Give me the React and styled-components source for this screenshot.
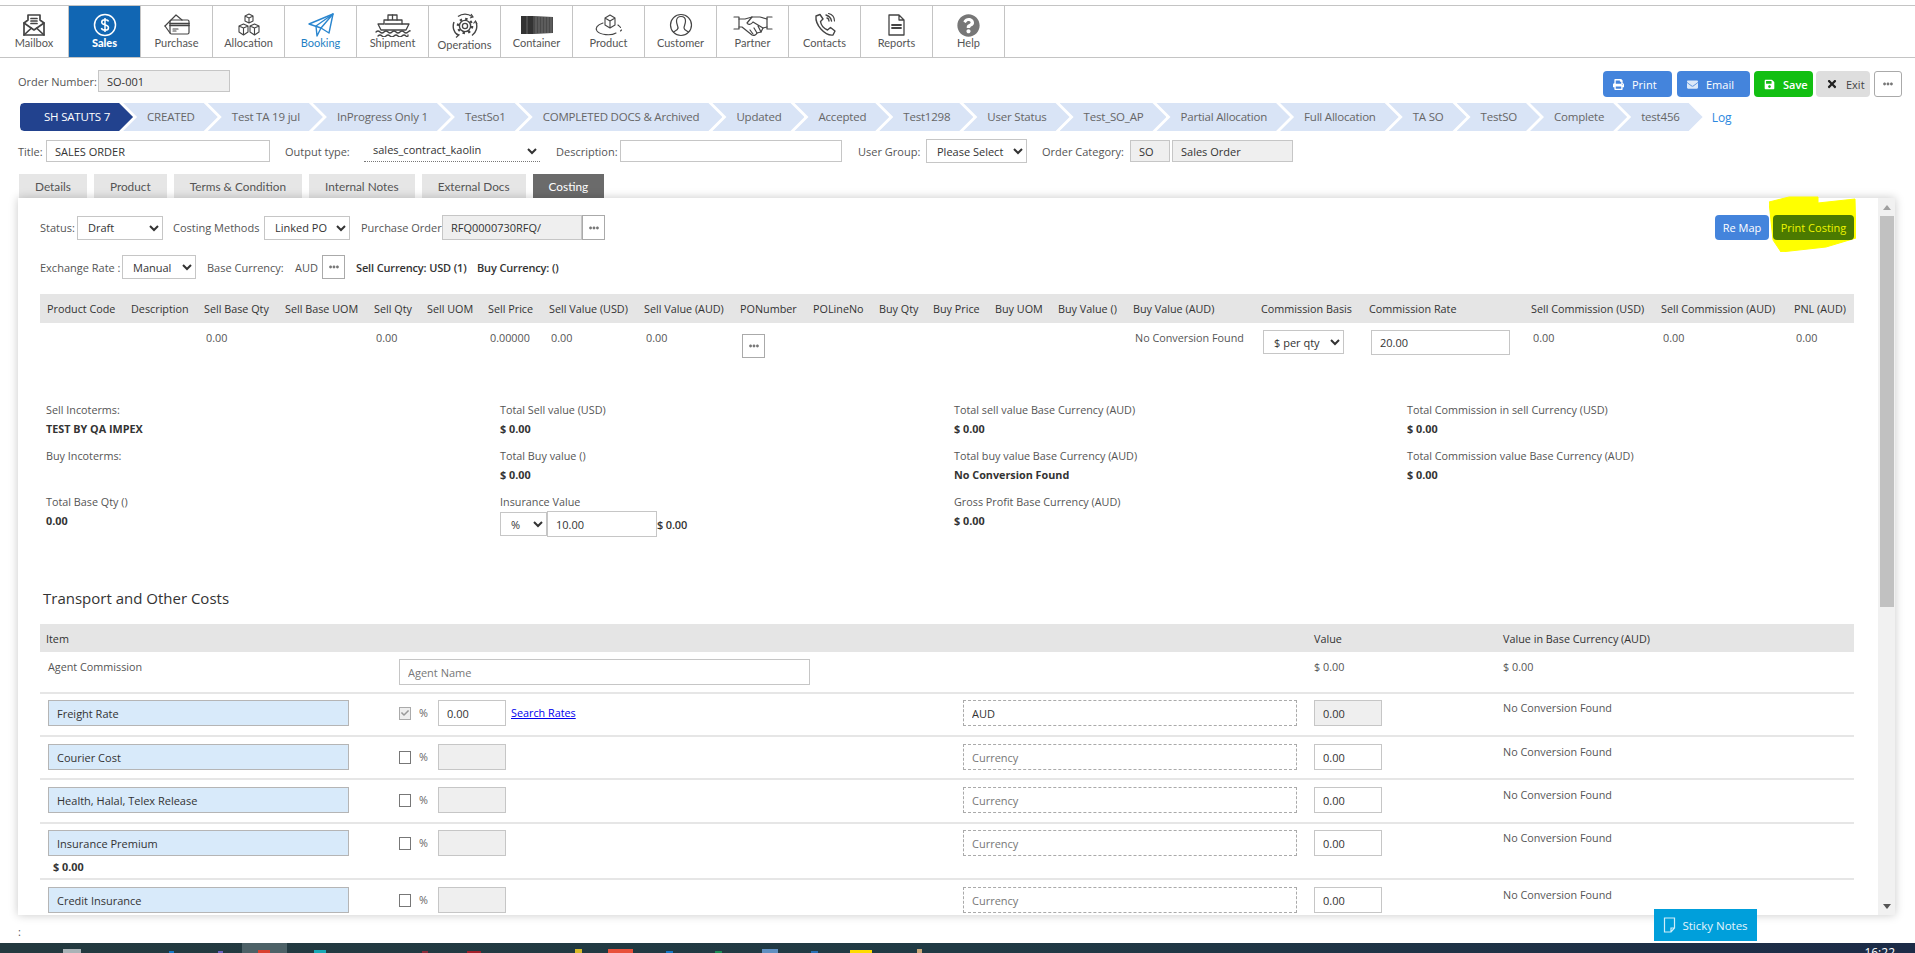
import styled, { createGlobalStyle } from 'styled-components';
import { FaCheck, FaEllipsisH, FaEnvelope, FaPrint, FaQuestionCircle, FaSave, FaTimes } from 'react-icons/fa';

const GlobalStyle = createGlobalStyle`
  html, body {
    margin: 0;
    padding: 0;
    background: #fff;
  }
  * {
    box-sizing: border-box;
  }
  body {
    font-family: "Open Sans", "Noto Sans", sans-serif;
    font-size: 11px;
    color: #444;
  }
`;

const Page = styled.div`
  position: relative;
  width: 1915px;
  height: 953px;
  overflow: hidden;
  padding-top: 5px;
`;

/* top navigation */
const Nav = styled.nav`
  display: flex;
  height: 53px;
  border-top: 1px solid #c4c4c4;
  border-bottom: 1px solid #c4c4c4;
`;

const NavItem = styled.div`
  width: ${(p) => p.$w || 72}px;
  flex: none;
  display: flex;
  flex-direction: column;
  align-items: center;
  padding-top: 6px;
  border-right: 1px solid #c4c4c4;
  font-family: Lato, "Open Sans", sans-serif;
  font-size: 11px;
  line-height: 14px;
  font-weight: ${(p) => (p.$active ? 900 : 400)};
  color: ${(p) => (p.$active ? '#fff' : p.$blue ? '#1f7fc4' : '#555')};
  background: ${(p) => (p.$active ? '#1166b3' : 'transparent')};
`;

const NavIcon = styled.div`
  height: ${(p) => (p.$tall ? 28 : 26)}px;
  display: flex;
  align-items: center;
  justify-content: center;
  color: ${(p) => (p.$active ? '#fff' : p.$blue ? '#2a86cf' : '#444')};
  svg {
    display: block;
  }
`;

const NavLabel = styled.div`
  margin-top: -2px;
`;

const Stroke = ({ w = 24, h = 24, vb = '0 0 24 24', sw = 1.4, children }) => (
  <svg width={w} height={h} viewBox={vb} fill="none" stroke="currentColor" strokeWidth={sw} strokeLinejoin="round" strokeLinecap="round">
    {children}
  </svg>
);

const icons = {
  mailbox: (
    <Stroke sw={1.7}>
      <path d="M2 10 L6 7 V2 H18 V7 L22 10 V22 H2 Z" />
      <path d="M2 10 L12 17 L22 10 M2 22 L9.5 15 M22 22 L14.5 15" />
      <path d="M9 5.5 H15 M9 8 H15 M9 10.5 H15" />
    </Stroke>
  ),
  sales: (
    <svg width="24" height="24" viewBox="0 0 24 24" fill="none" stroke="currentColor" strokeWidth="1.5">
      <circle cx="12" cy="12" r="10.5" />
      <path d="M15.5 8.5 C15 7 13.5 6.7 12 6.7 C10 6.7 8.7 7.7 8.7 9.2 C8.7 12.5 15.5 11 15.5 14.7 C15.5 16.3 14 17.2 12 17.2 C10.2 17.2 8.8 16.5 8.4 15 M12 5 V19" />
    </svg>
  ),
  purchase: (
    <Stroke w={26} h={22} vb="0 0 26 22" sw={1.2}>
      <path d="M1 12 L12 1 L18 6" />
      <path d="M1 12 L6 19" />
      <rect x="6" y="6" width="19" height="14" rx="1.5" />
      <path d="M6 9.5 H25 M6 11.5 H25" strokeWidth="1.6" />
      <path d="M9 15 H14 M9 17 H12" />
    </Stroke>
  ),
  allocation: (
    <Stroke sw={1.1}>
      <path d="M8 3 L12 1 L16 3 V8 L12 10 L8 8 Z M8 3 L12 5 L16 3 M12 5 V10" />
      <path d="M2 13 L6.5 11 L11 13 V19 L6.5 22 L2 19 Z M2 13 L6.5 15 L11 13 M6.5 15 V22" />
      <path d="M13 13 L17.5 11 L22 13 V19 L17.5 22 L13 19 Z M13 13 L17.5 15 L22 13 M17.5 15 V22" />
    </Stroke>
  ),
  booking: (
    <Stroke w={26} h={24} vb="0 0 26 24" sw={1.4}>
      <path d="M1 11 L25 1 L21 20 L13 15 Z" />
      <path d="M25 1 L8 13 L9 23 L13 15 L25 1" />
    </Stroke>
  ),
  shipment: (
    <Stroke w={36} h={24} vb="0 0 36 24" sw={1.3}>
      <path d="M3 11 H9 V7 H13 V2 H22 V7 H27 V11 H34 L31 17 H6 Z" />
      <path d="M13 7 H22 M17.5 2 V7 M10 11 H27" />
      <path d="M1 19 Q3 17 5 19 T9 19 T13 19 T17 19 T21 19 T25 19 T29 19 T33 19 T35 18" />
      <path d="M3 23 Q5 21 7 23 T11 23 T15 23 T19 23 T23 23 T27 23 T31 23 T33 22" />
    </Stroke>
  ),
  operations: (
    <svg width="26" height="26" viewBox="0 0 26 26" fill="none" stroke="currentColor">
      <circle cx="13" cy="13" r="2.6" strokeWidth="1.3" />
      <circle cx="13" cy="13" r="5.6" strokeWidth="1.4" />
      <circle cx="13" cy="13" r="7.2" strokeWidth="2.2" strokeDasharray="2.4 3.25" />
      <path d="M6 3.5 A11.5 11.5 0 0 1 20 3.5 M24 9 A11.5 11.5 0 0 1 20 22.5 M6 22.5 A11.5 11.5 0 0 1 2 9" strokeWidth="1.4" />
      <path d="M19 1 L21 4 L18 5 M25 11 L23.5 8 L21.5 10.5 M4 24.5 L7 22 L4 20.5" strokeWidth="1.2" />
    </svg>
  ),
  container: (
    <svg width="32" height="20" viewBox="0 0 32 20" fill="#333">
      <rect x="0" y="1" width="12" height="18" />
      <path d="M12 1 L32 2 V18 L12 19 Z" fill="#4a4a4a" />
      <path d="M6 1 V19 M15 1.5 V18.5 M18 2 V18 M21 2 V18 M24 2 V18 M27 2 V18 M30 2 V18" stroke="#808080" strokeWidth="0.7" />
    </svg>
  ),
  product: (
    <Stroke w={30} h={22} vb="0 0 30 22" sw={1.1}>
      <path d="M11 4 L16 1 L21 4 V11 L16 14 L11 11 Z M11 4 L16 7 L21 4 M16 7 V14" />
      <path d="M9 9 C3 11 1 14 3 17 C6 21 17 22 22 19" />
      <path d="M24 11 C25 12 26 12.5 26.5 13.5 M27.5 16 L26.5 17" />
    </Stroke>
  ),
  customer: (
    <Stroke sw={1.2}>
      <circle cx="12" cy="12" r="10.5" />
      <path d="M9 15 C9 13 7.5 11 7.5 8 C7.5 5 9.5 3.5 12 3.5 C14.5 3.5 16.5 5 16.5 8 C16.5 11 15 13 15 15 C15 17 18 18 19.5 19" />
      <path d="M9 15 C9 17 6 18 4.5 19" />
    </Stroke>
  ),
  partner: (
    <Stroke w={40} h={22} vb="0 0 40 22" sw={1.2}>
      <path d="M1 3 H6 V15 H1 M39 3 H34 V15 H39" />
      <path d="M6 5 H12 L19 3 L27 3 L34 5 M6 13 H9 L19 21 C21 22 23 21 24 19 L28 18 L30 14 L34 13" />
      <path d="M19 3 L14 9 C15 11 18 11 20 8 L30 14 M25 12 L28 18 M21 14 L24 19 M17 16 L20 20" />
    </Stroke>
  ),
  contacts: (
    <Stroke sw={1.4}>
      <path d="M3 3 L7 1.5 L10 6 L7.5 8.5 C8 12 11 15.5 14.5 17 L17.5 14.5 L22 18 L20 22 C12 23 2 12 3 3 Z" />
      <path d="M13 2 C16 3 18 5 18.5 8 M14 5 C15.5 5.5 16 6.5 16 8" />
      <path d="M15.5 0.5 C19.5 1.5 21.5 4.5 21.5 8" strokeWidth="1.1" />
    </Stroke>
  ),
  reports: (
    <Stroke w={17} h={22} vb="0 0 17 22" sw={1.3}>
      <path d="M1 1 H11 L16 6 V21 H1 Z M11 1 V6 H16" />
      <path d="M4 11 H13 M4 14 H13" strokeWidth="1.8" />
    </Stroke>
  ),
  help: <FaQuestionCircle size={23} color="#777" />,
};

const navItems = [
  { id: 'mailbox', label: 'Mailbox', w: 69 },
  { id: 'sales', label: 'Sales', active: true },
  { id: 'purchase', label: 'Purchase' },
  { id: 'allocation', label: 'Allocation' },
  { id: 'booking', label: 'Booking', blue: true },
  { id: 'shipment', label: 'Shipment' },
  { id: 'operations', label: 'Operations', tall: true },
  { id: 'container', label: 'Container' },
  { id: 'product', label: 'Product' },
  { id: 'customer', label: 'Customer' },
  { id: 'partner', label: 'Partner' },
  { id: 'contacts', label: 'Contacts' },
  { id: 'reports', label: 'Reports' },
  { id: 'help', label: 'Help' },
];

/* order header */
const OrderRow = styled.div`
  display: flex;
  align-items: flex-start;
  justify-content: space-between;
  height: 28px;
  margin-top: 12px;
  padding: 0 13px 0 18px;
`;

const Inline = styled.div`
  display: flex;
  align-items: center;
  margin-top: ${(p) => p.$mt || 0}px;
`;

const Label = styled.label`
  flex: none;
  width: ${(p) => (p.$w ? `${p.$w}px` : 'auto')};
  margin-left: ${(p) => p.$ml || 0}px;
  font-size: 11px;
  color: ${(p) => p.$color || '#555'};
  white-space: nowrap;
`;

const Input = styled.input`
  flex: none;
  display: block;
  width: ${(p) => p.$w}px;
  height: ${(p) => p.$h || 26}px;
  margin-left: ${(p) => p.$ml || 0}px;
  padding: 0 8px;
  border: 1px solid ${(p) => (p.$dashed ? '#aaa' : p.$blue ? '#b5b5b5' : '#c6c6c6')};
  border-style: ${(p) => (p.$dashed ? 'dashed' : 'solid')};
  border-radius: 0;
  outline: none;
  background: ${(p) => (p.$grey ? '#efefef' : p.$blue ? '#d8eafa' : '#fff')};
  font-family: "Open Sans", sans-serif;
  font-size: 11px;
  color: #333;
  &::placeholder {
    color: #777;
    opacity: 1;
  }
`;

const Select = styled.select`
  flex: none;
  display: block;
  width: ${(p) => p.$w}px;
  height: ${(p) => p.$h || 24}px;
  margin-left: ${(p) => p.$ml || 0}px;
  padding-left: 6px;
  border: 1px solid #c6c6c6;
  border-radius: 0;
  outline: none;
  background-color: #fff;
  font-family: "Open Sans", sans-serif;
  font-size: 11px;
  color: #333;
`;

const OutputSelect = styled(Select)`
  height: 21px;
  padding: 0 0 4px 5px;
  border: none;
  border-bottom: 1px dotted #777;
`;

const ActionButton = styled.button`
  display: flex;
  align-items: center;
  gap: 8px;
  width: ${(p) => p.$w}px;
  height: 26px;
  margin-left: ${(p) => p.$ml || 4}px;
  padding: 0 0 0 10px;
  border: none;
  border-radius: 4px;
  background: ${(p) => p.$bg};
  color: ${(p) => p.$color || '#fff'};
  font-family: "Open Sans", sans-serif;
  font-size: 11px;
  font-weight: ${(p) => (p.$bold ? 600 : 400)};
`;

const DotsButton = styled.button`
  flex: none;
  display: flex;
  align-items: center;
  justify-content: center;
  width: ${(p) => p.$w || 23}px;
  height: ${(p) => p.$h || 24}px;
  margin-left: ${(p) => p.$ml || 0}px;
  margin-top: ${(p) => p.$mt || 0}px;
  padding: 0;
  background: #fff;
  border: 1px solid ${(p) => p.$line || '#aaa'};
  border-radius: ${(p) => p.$radius || 0}px;
  color: #777;
`;

/* status steps */
const Steps = styled.div`
  display: flex;
  align-items: center;
  height: 28px;
  margin-top: 5px;
  padding-left: 20px;
`;

const Step = styled.div`
  flex: none;
  height: 28px;
  line-height: 28px;
  margin-left: ${(p) => (p.$first ? 0 : -10)}px;
  padding: 0 23px 0 24px;
  font-size: 11.5px;
  white-space: nowrap;
  letter-spacing: -0.2px;
  background: ${(p) => (p.$first ? '#22428e' : '#d9e4f6')};
  color: ${(p) => (p.$first ? '#fff' : '#666')};
  clip-path: ${(p) =>
    p.$first
      ? 'polygon(4px 0, calc(100% - 14px) 0, 100% 50%, calc(100% - 14px) 100%, 4px 100%, 1px calc(100% - 1px), 0 calc(100% - 4px), 0 4px, 1px 1px)'
      : 'polygon(0 0, calc(100% - 14px) 0, 100% 50%, calc(100% - 14px) 100%, 0 100%, 14px 50%)'};
`;

const LogLink = styled.a`
  margin-left: 9px;
  font-size: 12px;
  color: #2b88e0;
`;

/* title row */
const TitleRow = styled.div`
  display: flex;
  align-items: center;
  height: 24px;
  margin-top: 8px;
  padding-left: 18px;
`;

/* tabs */
const Tabs = styled.div`
  display: flex;
  gap: 7px;
  height: 24px;
  margin-top: 11px;
  padding-left: 19px;
`;

const Tab = styled.div`
  padding: 0 16px;
  font-family: Lato, "Open Sans", sans-serif;
  font-size: 11.8px;
  line-height: 25px;
  background: ${(p) => (p.$active ? '#6b6b6b' : '#e6e6e6')};
  color: ${(p) => (p.$active ? '#fff' : '#555')};
`;

/* costing panel */
const Panel = styled.section`
  position: relative;
  display: flex;
  width: 1877px;
  height: 717px;
  margin-left: 18px;
  background: #fff;
  box-shadow: 0 0 9px rgba(0, 0, 0, 0.22);
`;

const PanelBody = styled.div`
  flex: 1;
  min-width: 0;
  overflow: hidden;
  padding: 17px 24px 0 22px;
`;

const Scrollbar = styled.div`
  flex: none;
  width: 17px;
  display: flex;
  flex-direction: column;
  align-items: center;
  background: #f1f1f1;
`;

const ScrollArrow = styled.div`
  height: 18px;
  flex: none;
  display: flex;
  align-items: center;
  justify-content: center;
  margin-top: ${(p) => (p.$down ? 'auto' : 0)};
  &::before {
    content: '';
    border-left: 4px solid transparent;
    border-right: 4px solid transparent;
    ${(p) => (p.$down ? 'border-top: 5px solid #555;' : 'border-bottom: 5px solid #a0a0a0;')}
  }
`;

const ScrollThumb = styled.div`
  width: 14px;
  height: 391px;
  background: #c1c1c1;
`;

const Highlight = styled.svg`
  position: absolute;
  top: -2px;
  right: 39px;
  z-index: 0;
`;

const ControlRow = styled.div`
  display: flex;
  align-items: center;
  height: ${(p) => p.$h || 25}px;
  margin-top: ${(p) => p.$mt || 0}px;
`;

const PanelActions = styled.div`
  position: relative;
  z-index: 1;
  display: flex;
  margin-left: auto;
`;

const SmallButton = styled.button`
  width: ${(p) => p.$w}px;
  height: 25px;
  margin-left: ${(p) => p.$ml || 0}px;
  padding: 0;
  border: none;
  border-radius: 4px;
  background: ${(p) => p.$bg};
  color: ${(p) => p.$color};
  font-family: "Open Sans", sans-serif;
  font-size: 11px;
`;

const Bold = styled.span`
  flex: none;
  width: ${(p) => (p.$w ? `${p.$w}px` : 'auto')};
  margin-left: ${(p) => p.$ml || 0}px;
  font-size: 11px;
  font-weight: 600;
  letter-spacing: -0.15px;
  color: #333;
  white-space: nowrap;
`;

const costCols = '84px 73px 81px 89px 53px 61px 61px 95px 96px 73px 66px 54px 62px 63px 75px 128px 108px 162px 130px 133px 67px';

const CostHeader = styled.div`
  display: grid;
  grid-template-columns: ${costCols};
  align-items: center;
  height: 29px;
  margin-top: 15px;
  background: #e5e5e5;
`;

const HeadCell = styled.div`
  padding-left: 7px;
  font-size: 10.8px;
  font-weight: 500;
  color: #333;
  white-space: nowrap;
`;

const CostRow = styled.div`
  display: grid;
  grid-template-columns: ${costCols};
  align-items: start;
  height: 78px;
  padding-top: 7px;
`;

const ValueCell = styled.div`
  padding-left: 9px;
  font-size: 10.8px;
  line-height: 16px;
  color: #555;
  white-space: nowrap;
`;

const InfoGrid = styled.div`
  display: grid;
  grid-template-columns: 454px 454px 453px 1fr;
  padding-left: 6px;
`;

const InfoBlock = styled.div`
  height: 46px;
`;

const InfoLabel = styled.div`
  font-size: 10.8px;
  line-height: 18px;
  color: #555;
  white-space: nowrap;
`;

const InfoValue = styled.div`
  font-size: 10.8px;
  line-height: 20px;
  font-weight: 700;
  color: #333;
  white-space: nowrap;
`;

const SectionTitle = styled.h3`
  margin: 49px 0 16px 3px;
  font-size: 15px;
  line-height: 20px;
  font-weight: 500;
  color: #333;
`;

const transportCols = '359px 564px 351px 189px 1fr';

const TransportHeader = styled.div`
  display: grid;
  grid-template-columns: ${transportCols};
  align-items: center;
  height: 28px;
  background: #e5e5e5;
  font-size: 10.8px;
  font-weight: 500;
  color: #333;
`;

const TransportRow = styled.div`
  display: grid;
  grid-template-columns: ${transportCols};
  align-items: start;
  height: ${(p) => p.$h}px;
  padding-top: ${(p) => p.$pad || 7}px;
  border-bottom: 2px solid #e6e6e6;
  font-size: 10.8px;
  line-height: 16px;
  color: #555;
`;

const FirstCell = styled.div`
  padding-left: ${(p) => p.$pl || 8}px;
  white-space: nowrap;
`;

const SmallAmount = styled.div`
  margin: 3px 0 0 5px;
  font-weight: 700;
  color: #333;
`;

const PctCell = styled.div`
  display: flex;
  align-items: center;
  height: 26px;
`;

const Checkbox = styled.span`
  flex: none;
  display: flex;
  align-items: center;
  justify-content: center;
  width: 12px;
  height: 13px;
  border: 1px solid ${(p) => (p.$checked ? '#aaa' : '#777')};
  background: ${(p) => (p.$checked ? '#eee' : '#fff')};
  color: #999;
`;

const Percent = styled.span`
  flex: none;
  width: 27px;
  padding-left: 8px;
  color: #666;
`;

const RatesLink = styled.a`
  margin-left: 5px;
  color: #0000ee;
  text-decoration: underline;
`;

/* bottom */
const Colon = styled.div`
  margin: 10px 0 0 18px;
  line-height: 14px;
  color: #555;
`;

const Taskbar = styled.div`
  position: absolute;
  left: 0;
  right: 0;
  bottom: 0;
  display: flex;
  align-items: flex-end;
  height: 10px;
  overflow: hidden;
  background: linear-gradient(90deg, #23393f 0%, #203a44 50%, #1c2b47 100%);
`;

const TaskIcon = styled.i`
  flex: none;
  width: ${(p) => p.$w}px;
  height: ${(p) => p.$h || 4}px;
  margin-left: ${(p) => p.$ml}px;
  background: ${(p) => p.$c};
`;

const Clock = styled.div`
  align-self: flex-start;
  margin-left: auto;
  margin-right: 20px;
  padding-top: 4px;
  font-size: 12px;
  line-height: 12px;
  color: #fff;
`;

const StickyNotes = styled.div`
  position: absolute;
  right: 158px;
  bottom: 12px;
  display: flex;
  align-items: center;
  justify-content: center;
  gap: 6px;
  width: 103px;
  height: 32px;
  background: #009fdb;
  color: #e4f5fc;
  font-size: 11.5px;
`;

const steps = [
  'SH SATUTS 7', 'CREATED', 'Test TA 19 jul', 'InProgress Only 1', 'TestSo1', 'COMPLETED DOCS & Archived',
  'Updated', 'Accepted', 'Test1298', 'User Status', 'Test_SO_AP', 'Partial Allocation', 'Full Allocation',
  'TA SO', 'TestSO', 'Complete', 'test456',
];

const tabs = ['Details', 'Product', 'Terms & Condition', 'Internal Notes', 'External Docs', 'Costing'];

const costHead = [
  'Product Code', 'Description', 'Sell Base Qty', 'Sell Base UOM', 'Sell Qty', 'Sell UOM', 'Sell Price',
  'Sell Value (USD)', 'Sell Value (AUD)', 'PONumber', 'POLineNo', 'Buy Qty', 'Buy Price', 'Buy UOM', 'Buy Value ()',
  'Buy Value (AUD)', 'Commission Basis', 'Commission Rate', 'Sell Commission (USD)', 'Sell Commission (AUD)', 'PNL (AUD)',
];

const costValues = {
  2: '0.00', 4: '0.00', 6: '0.00000', 7: '0.00', 8: '0.00', 15: 'No Conversion Found', 18: '0.00', 19: '0.00', 20: '0.00',
};

const transportRows = [
  { name: 'Freight Rate', h: 43, pad: 6, checked: true, rate: '0.00', currency: 'AUD', value: '0.00', locked: true },
  { name: 'Courier Cost', h: 43 },
  { name: 'Health, Halal, Telex Release', h: 44 },
  { name: 'Insurance Premium', h: 56, pad: 6, amount: '$ 0.00' },
  { name: 'Credit Insurance', h: 44 },
];

const taskIcons = [
  { ml: 63, w: 18, c: '#a9b2b6', h: 4 },
  { ml: 88, w: 5, c: '#1678c8', h: 2 },
  { ml: 44, w: 5, c: '#6a62c0', h: 2 },
  { ml: 19, w: 45, c: '#4d6167', h: 10 },
  { ml: -29, w: 12, c: '#d9402f', h: 3 },
  { ml: 44, w: 12, c: '#17a9b5', h: 3 },
  { ml: 96, w: 6, c: '#8a2c3a', h: 2 },
  { ml: 39, w: 14, c: '#a31f2a', h: 2 },
  { ml: 94, w: 7, c: '#d6b92a', h: 4 },
  { ml: 26, w: 25, c: '#e8503a', h: 4 },
  { ml: 33, w: 7, c: '#1678c8', h: 2 },
  { ml: 42, w: 7, c: '#1c8f57', h: 2 },
  { ml: 40, w: 16, c: '#5f8fc0', h: 4 },
  { ml: 33, w: 7, c: '#2a6fb5', h: 2 },
  { ml: 32, w: 22, c: '#ffdc00', h: 3 },
  { ml: 45, w: 5, c: '#c9a77a', h: 4 },
];

function Dots({ size = 10 }) {
  return <FaEllipsisH size={size} />;
}

function TransportLine({ row }) {
  return (
    <TransportRow $h={row.h} $pad={row.pad}>
      <FirstCell>
        <Input $w={301} $blue readOnly value={row.name} />
        {row.amount && <SmallAmount>{row.amount}</SmallAmount>}
      </FirstCell>
      <PctCell>
        <Checkbox $checked={row.checked}>{row.checked && <FaCheck size={8} />}</Checkbox>
        <Percent>%</Percent>
        <Input $w={68} $grey={!row.rate} readOnly value={row.rate || ''} />
        {row.rate && <RatesLink href="#">Search Rates</RatesLink>}
      </PctCell>
      <div>
        <Input $w={334} $dashed readOnly placeholder="Currency" value={row.currency || ''} />
      </div>
      <div>
        <Input $w={68} $grey={row.locked} readOnly value={row.value || '0.00'} />
      </div>
      <div>No Conversion Found</div>
    </TransportRow>
  );
}

export default function App() {
  return (
    <Page>
      <GlobalStyle />
      <Nav>
        {navItems.map((item) => (
          <NavItem key={item.id} $w={item.w} $active={item.active} $blue={item.blue}>
            <NavIcon $tall={item.tall} $active={item.active} $blue={item.blue}>{icons[item.id]}</NavIcon>
            <NavLabel>{item.label}</NavLabel>
          </NavItem>
        ))}
      </Nav>

      <OrderRow>
        <Inline>
          <Label $w={80}>Order Number:</Label>
          <Input $w={132} $h={22} $grey readOnly value="SO-001" />
        </Inline>
        <Inline $mt={1}>
          <ActionButton $w={69} $bg="#4484dc"><FaPrint size={11} />Print</ActionButton>
          <ActionButton $w={73} $ml={5} $bg="#4484dc"><FaEnvelope size={11} color="#dbe8f8" />Email</ActionButton>
          <ActionButton $w={59} $bg="#12bf12" $bold><FaSave size={11} />Save</ActionButton>
          <ActionButton $w={54} $ml={3} $bg="#dedede" $color="#444"><FaTimes size={12} color="#222" />Exit</ActionButton>
          <DotsButton $w={28} $h={26} $ml={4} $radius={3}><Dots /></DotsButton>
        </Inline>
      </OrderRow>

      <Steps>
        {steps.map((step, i) => (
          <Step key={step} $first={i === 0}>{step}</Step>
        ))}
        <LogLink>Log</LogLink>
      </Steps>

      <TitleRow>
        <Label $w={28}>Title:</Label>
        <Input $w={224} $h={22} readOnly value="SALES ORDER" />
        <Label $w={79} $ml={15}>Output type:</Label>
        <OutputSelect $w={176} defaultValue="k"><option value="k">sales_contract_kaolin</option></OutputSelect>
        <Label $w={64} $ml={16}>Description:</Label>
        <Input $w={222} $h={22} readOnly />
        <Label $w={68} $ml={16}>User Group:</Label>
        <Select $w={101}><option>Please Select</option></Select>
        <Label $w={88} $ml={15}>Order Category:</Label>
        <Input $w={40} $h={22} $grey readOnly value="SO" />
        <Input $w={121} $h={22} $ml={2} $grey readOnly value="Sales Order" />
      </TitleRow>

      <Tabs>
        {tabs.map((tab) => (
          <Tab key={tab} $active={tab === 'Costing'}>{tab}</Tab>
        ))}
      </Tabs>

      <Panel>
        <Highlight width="87" height="56" viewBox="0 0 87 56">
          <path d="M0 6 L20 1 L49 1 L49 7 L86 3 L87 42 L57 51 L12 56 L4 44 Z" fill="#ffff00" stroke="#ffff00" strokeLinejoin="round" />
        </Highlight>
        <PanelBody>
          <ControlRow>
            <Label $w={37}>Status:</Label>
            <Select $w={86}><option>Draft</option></Select>
            <Label $w={91} $ml={10}>Costing Methods</Label>
            <Select $w={86}><option>Linked PO</option></Select>
            <Label $w={81} $ml={11}>Purchase Order</Label>
            <Input $w={140} $h={25} $grey readOnly value="RFQ0000730RFQ/" />
            <DotsButton $h={25}><Dots /></DotsButton>
            <PanelActions>
              <SmallButton $w={54} $bg="#4484dc" $color="#fff">Re Map</SmallButton>
              <SmallButton $w={81} $ml={4} $bg="#4b7a00" $color="#eef500">Print Costing</SmallButton>
            </PanelActions>
          </ControlRow>

          <ControlRow $mt={15} $h={24}>
            <Label $w={82}>Exchange Rate :</Label>
            <Select $w={74}><option>Manual</option></Select>
            <Label $w={88} $ml={11}>Base Currency:</Label>
            <Label $w={27}>AUD</Label>
            <DotsButton $h={24}><Dots /></DotsButton>
            <Bold $ml={11} $w={121}>Sell Currency: USD (1)</Bold>
            <Bold>Buy Currency: ()</Bold>
          </ControlRow>

          <CostHeader>
            {costHead.map((head) => (
              <HeadCell key={head}>{head}</HeadCell>
            ))}
          </CostHeader>
          <CostRow>
            {costHead.map((head, i) => (
              <ValueCell key={head}>
                {costValues[i]}
                {i === 9 && <DotsButton $h={24} $mt={4}><Dots /></DotsButton>}
                {i === 16 && <Select $w={81}><option>$ per qty</option></Select>}
                {i === 17 && <Input $w={139} $h={25} readOnly value="20.00" />}
              </ValueCell>
            ))}
          </CostRow>

          <InfoGrid>
            <InfoBlock><InfoLabel>Sell Incoterms:</InfoLabel><InfoValue>TEST BY QA IMPEX</InfoValue></InfoBlock>
            <InfoBlock><InfoLabel>Total Sell value (USD)</InfoLabel><InfoValue>$ 0.00</InfoValue></InfoBlock>
            <InfoBlock><InfoLabel>Total sell value Base Currency (AUD)</InfoLabel><InfoValue>$ 0.00</InfoValue></InfoBlock>
            <InfoBlock><InfoLabel>Total Commission in sell Currency (USD)</InfoLabel><InfoValue>$ 0.00</InfoValue></InfoBlock>

            <InfoBlock><InfoLabel>Buy Incoterms:</InfoLabel></InfoBlock>
            <InfoBlock><InfoLabel>Total Buy value ()</InfoLabel><InfoValue>$ 0.00</InfoValue></InfoBlock>
            <InfoBlock><InfoLabel>Total buy value Base Currency (AUD)</InfoLabel><InfoValue>No Conversion Found</InfoValue></InfoBlock>
            <InfoBlock><InfoLabel>Total Commission value Base Currency (AUD)</InfoLabel><InfoValue>$ 0.00</InfoValue></InfoBlock>

            <InfoBlock><InfoLabel>Total Base Qty ()</InfoLabel><InfoValue>0.00</InfoValue></InfoBlock>
            <InfoBlock>
              <InfoLabel>Insurance Value</InfoLabel>
              <Inline>
                <Select $w={47}><option>%</option></Select>
                <Input $w={110} readOnly value="10.00" />
                <Bold>$ 0.00</Bold>
              </Inline>
            </InfoBlock>
            <InfoBlock><InfoLabel>Gross Profit Base Currency (AUD)</InfoLabel><InfoValue>$ 0.00</InfoValue></InfoBlock>
          </InfoGrid>

          <SectionTitle>Transport and Other Costs</SectionTitle>

          <TransportHeader>
            <FirstCell $pl={6}>Item</FirstCell>
            <div />
            <div />
            <div>Value</div>
            <div>Value in Base Currency (AUD)</div>
          </TransportHeader>
          <TransportRow $h={42}>
            <FirstCell>Agent Commission</FirstCell>
            <div><Input $w={411} readOnly placeholder="Agent Name" /></div>
            <div />
            <div>$ 0.00</div>
            <div>$ 0.00</div>
          </TransportRow>
          {transportRows.map((row) => (
            <TransportLine key={row.name} row={row} />
          ))}
        </PanelBody>
        <Scrollbar>
          <ScrollArrow />
          <ScrollThumb />
          <ScrollArrow $down />
        </Scrollbar>
      </Panel>

      <Colon>:</Colon>

      <StickyNotes>
        <svg width="13" height="16" viewBox="0 0 13 16" fill="none" stroke="#cfeefa" strokeWidth="1.2">
          <path d="M1.5 1 H11.5 V11 L8 15 H1.5 Z M11.5 11 H8 V15" />
        </svg>
        Sticky Notes
      </StickyNotes>

      <Taskbar>
        {taskIcons.map((icon) => (
          <TaskIcon key={`${icon.ml}-${icon.c}`} $ml={icon.ml} $w={icon.w} $h={icon.h} $c={icon.c} />
        ))}
        <Clock>16:22</Clock>
      </Taskbar>
    </Page>
  );
}
